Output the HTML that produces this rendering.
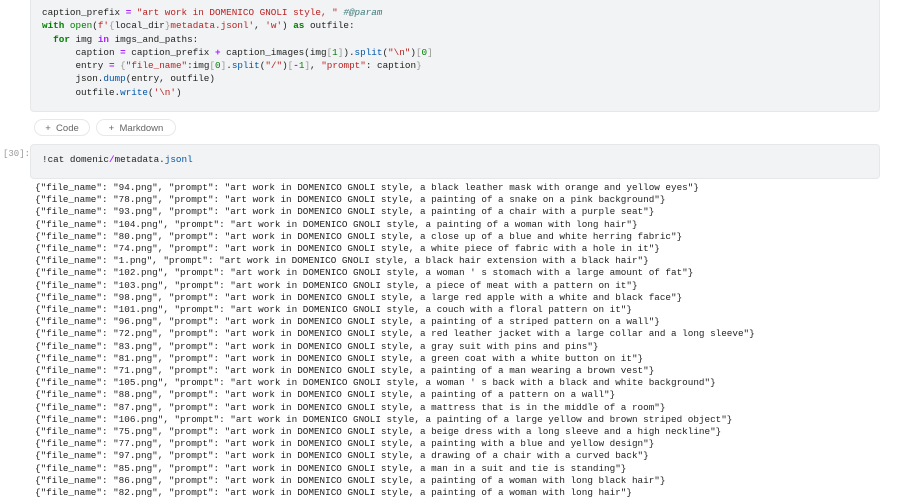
<!DOCTYPE html>
<html><head><meta charset="utf-8"><style>
body{margin:0;width:900px;height:494px;overflow:hidden;background:#fff;position:relative;font-family:"Liberation Mono",monospace;}
.cell{position:absolute;left:30px;width:850px;background:#f2f3f4;border:1px solid #e6e7e9;border-radius:4px;box-sizing:border-box;}
pre{margin:0;font-family:"Liberation Mono",monospace;font-size:9.3px;color:#222;}
.code{position:absolute;left:42px;top:6px;line-height:13.3px;}
.k{color:#008000;font-weight:bold}.s{color:#ba2121}.o{color:#aa22ff;font-weight:bold}.c{color:#3d7b7b;font-style:italic}.f{color:#0055aa}.n{color:#008000}.b{color:#999}
.btn{position:absolute;top:119px;height:17px;border:1px solid #e8e8e8;border-radius:9px;font-family:"Liberation Sans",sans-serif;font-size:9.5px;color:#666;line-height:17px;text-align:center;box-sizing:border-box;}
.out{position:absolute;left:35px;top:182px;line-height:12.2px;color:#222;}
</style></head><body>
<div class="cell" style="top:-4px;height:116px"></div>
<pre class="code">caption_prefix <span class="o">=</span> <span class="s">"art work in DOMENICO GNOLI style, "</span> <span class="c">#@param</span>
<span class="k">with</span> <span class="n">open</span>(<span class="s">f'</span><span class="b">{</span>local_dir<span class="b">}</span><span class="s">metadata.jsonl'</span>, <span class="s">'w'</span>) <span class="k">as</span> outfile:
  <span class="k">for</span> img <span class="o">in</span> imgs_and_paths:
      caption <span class="o">=</span> caption_prefix <span class="o">+</span> caption_images(img<span class="b">[</span><span class="n">1</span><span class="b">]</span>).<span class="f">split</span>(<span class="s">"\n"</span>)<span class="b">[</span><span class="n">0</span><span class="b">]</span>
      entry <span class="o">=</span> <span class="b">{</span><span class="s">"file_name"</span>:img<span class="b">[</span><span class="n">0</span><span class="b">]</span>.<span class="f">split</span>(<span class="s">"/"</span>)<span class="b">[</span><span class="o">-</span><span class="n">1</span><span class="b">]</span>, <span class="s">"prompt"</span>: caption<span class="b">}</span>
      json.<span class="f">dump</span>(entry, outfile)
      outfile.<span class="f">write</span>(<span class="s">'\n'</span>)</pre>
<div class="btn" style="left:34px;width:56px">+&nbsp; Code</div>
<div class="btn" style="left:96px;width:80px">+&nbsp; Markdown</div>
<pre style="position:absolute;left:3px;top:149px;color:#999;font-size:9px">[30]:</pre>
<div class="cell" style="top:144px;height:35px"></div>
<pre style="position:absolute;left:42px;top:154px">!cat domenic<span class="o">/</span>metadata.<span class="f">jsonl</span></pre>
<pre class="out">{"file_name": "94.png", "prompt": "art work in DOMENICO GNOLI style, a black leather mask with orange and yellow eyes"}
{"file_name": "78.png", "prompt": "art work in DOMENICO GNOLI style, a painting of a snake on a pink background"}
{"file_name": "93.png", "prompt": "art work in DOMENICO GNOLI style, a painting of a chair with a purple seat"}
{"file_name": "104.png", "prompt": "art work in DOMENICO GNOLI style, a painting of a woman with long hair"}
{"file_name": "80.png", "prompt": "art work in DOMENICO GNOLI style, a close up of a blue and white herring fabric"}
{"file_name": "74.png", "prompt": "art work in DOMENICO GNOLI style, a white piece of fabric with a hole in it"}
{"file_name": "1.png", "prompt": "art work in DOMENICO GNOLI style, a black hair extension with a black hair"}
{"file_name": "102.png", "prompt": "art work in DOMENICO GNOLI style, a woman ' s stomach with a large amount of fat"}
{"file_name": "103.png", "prompt": "art work in DOMENICO GNOLI style, a piece of meat with a pattern on it"}
{"file_name": "98.png", "prompt": "art work in DOMENICO GNOLI style, a large red apple with a white and black face"}
{"file_name": "101.png", "prompt": "art work in DOMENICO GNOLI style, a couch with a floral pattern on it"}
{"file_name": "96.png", "prompt": "art work in DOMENICO GNOLI style, a painting of a striped pattern on a wall"}
{"file_name": "72.png", "prompt": "art work in DOMENICO GNOLI style, a red leather jacket with a large collar and a long sleeve"}
{"file_name": "83.png", "prompt": "art work in DOMENICO GNOLI style, a gray suit with pins and pins"}
{"file_name": "81.png", "prompt": "art work in DOMENICO GNOLI style, a green coat with a white button on it"}
{"file_name": "71.png", "prompt": "art work in DOMENICO GNOLI style, a painting of a man wearing a brown vest"}
{"file_name": "105.png", "prompt": "art work in DOMENICO GNOLI style, a woman ' s back with a black and white background"}
{"file_name": "88.png", "prompt": "art work in DOMENICO GNOLI style, a painting of a pattern on a wall"}
{"file_name": "87.png", "prompt": "art work in DOMENICO GNOLI style, a mattress that is in the middle of a room"}
{"file_name": "106.png", "prompt": "art work in DOMENICO GNOLI style, a painting of a large yellow and brown striped object"}
{"file_name": "75.png", "prompt": "art work in DOMENICO GNOLI style, a beige dress with a long sleeve and a high neckline"}
{"file_name": "77.png", "prompt": "art work in DOMENICO GNOLI style, a painting with a blue and yellow design"}
{"file_name": "97.png", "prompt": "art work in DOMENICO GNOLI style, a drawing of a chair with a curved back"}
{"file_name": "85.png", "prompt": "art work in DOMENICO GNOLI style, a man in a suit and tie is standing"}
{"file_name": "86.png", "prompt": "art work in DOMENICO GNOLI style, a painting of a woman with long black hair"}
{"file_name": "82.png", "prompt": "art work in DOMENICO GNOLI style, a painting of a woman with long hair"}</pre>
</body></html>
